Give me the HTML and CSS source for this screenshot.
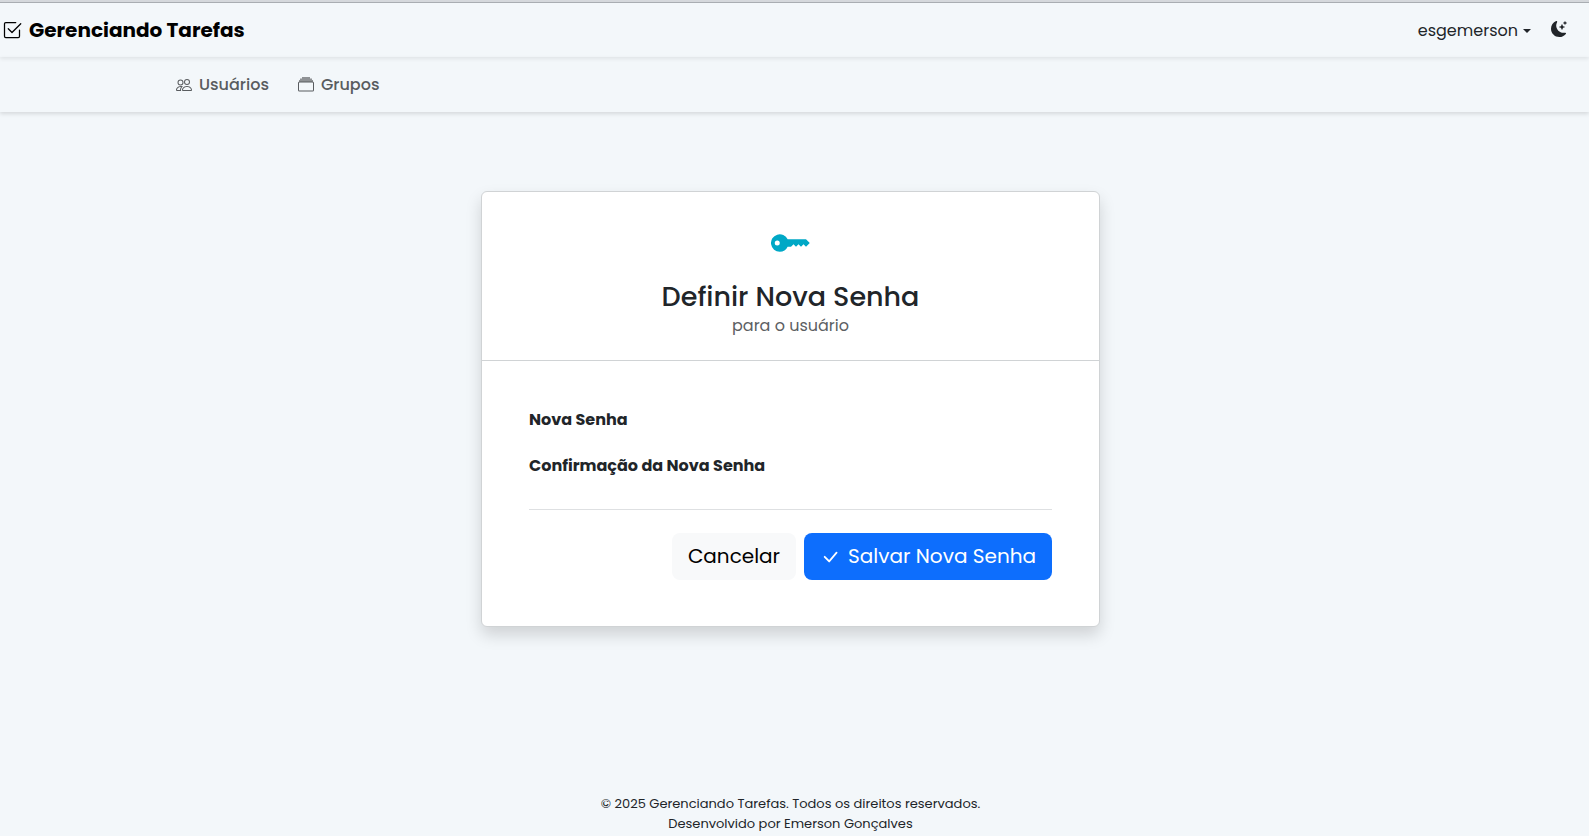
FILE: index.html
```html
<!DOCTYPE html>
<html lang="pt-BR">
<head>
<meta charset="utf-8">
<meta name="viewport" content="width=device-width, initial-scale=1">
<title>Gerenciando Tarefas</title>
<link rel="stylesheet" href="styles.css">
</head>
<body>
<header class="topbar">
  <a class="brand" href="#">
    <svg class="icon-brand" viewBox="0 0 16 16" fill="currentColor" aria-hidden="true"><path d="M3 14.5A1.5 1.5 0 0 1 1.5 13V3A1.5 1.5 0 0 1 3 1.5h8a.5.5 0 0 1 0 1H3a.5.5 0 0 0-.5.5v10a.5.5 0 0 0 .5.5h10a.5.5 0 0 0 .5-.5V8a.5.5 0 0 1 1 0v5a1.5 1.5 0 0 1-1.5 1.5z"/><path d="m8.354 10.354 7-7a.5.5 0 0 0-.708-.708L8 9.293 5.354 6.646a.5.5 0 1 0-.708.708l3 3a.5.5 0 0 0 .708 0"/></svg>
    <span>Gerenciando Tarefas</span>
  </a>
  <div class="account">
    <button class="user" type="button" aria-haspopup="true">esgemerson</button>
    <button class="theme" type="button" aria-label="Alternar tema">
      <svg class="icon" viewBox="0 0 16 16" fill="currentColor" aria-hidden="true"><path d="M6 .278a.77.77 0 0 1 .08.858 7.2 7.2 0 0 0-.878 3.46c0 4.021 3.278 7.277 7.318 7.277q.792-.001 1.533-.16a.79.79 0 0 1 .81.316.73.73 0 0 1-.031.893A8.35 8.35 0 0 1 8.344 16C3.734 16 0 12.286 0 7.71 0 4.266 2.114 1.312 5.124.06A.75.75 0 0 1 6 .278"/><path d="M10.794 3.148a.217.217 0 0 1 .412 0l.387 1.162c.173.518.579.924 1.097 1.097l1.162.387a.217.217 0 0 1 0 .412l-1.162.387a1.73 1.73 0 0 0-1.097 1.097l-.387 1.162a.217.217 0 0 1-.412 0l-.387-1.162A1.73 1.73 0 0 0 9.31 6.593l-1.162-.387a.217.217 0 0 1 0-.412l1.162-.387a1.73 1.73 0 0 0 1.097-1.097zM13.863.099a.145.145 0 0 1 .274 0l.258.774c.115.346.386.617.732.732l.774.258a.145.145 0 0 1 0 .274l-.774.258a1.16 1.16 0 0 0-.732.732l-.258.774a.145.145 0 0 1-.274 0l-.258-.774a1.16 1.16 0 0 0-.732-.732l-.774-.258a.145.145 0 0 1 0-.274l.774-.258c.346-.115.617-.386.732-.732z"/></svg>
    </button>
  </div>
</header>
<nav class="subnav" aria-label="Principal">
  <a class="nav-link" href="#">
    <svg class="icon" viewBox="0 0 16 16" fill="currentColor" aria-hidden="true"><path d="M15 14s1 0 1-1-1-4-5-4-5 3-5 4 1 1 1 1zm-7.978-1L7 12.996c.001-.264.167-1.03.76-1.72C8.312 10.629 9.282 10 11 10c1.717 0 2.687.63 3.24 1.276.593.69.758 1.457.76 1.72l-.008.002-.014.002zM11 7a2 2 0 1 0 0-4 2 2 0 0 0 0 4m3-2a3 3 0 1 1-6 0 3 3 0 0 1 6 0M6.936 9.28a6 6 0 0 0-1.23-.247A7 7 0 0 0 5 9c-4 0-5 3-5 4q0 1 1 1h4.216A2.24 2.24 0 0 1 5 13c0-1.01.377-2.042 1.09-2.904.243-.294.526-.569.846-.816M4.92 10A5.5 5.5 0 0 0 4 13H1c0-.26.164-1.03.76-1.724.545-.636 1.492-1.256 3.16-1.275ZM1.5 5.5a3 3 0 1 1 6 0 3 3 0 0 1-6 0m3-2a2 2 0 1 0 0 4 2 2 0 0 0 0-4"/></svg>
    <span>Usuários</span>
  </a>
  <a class="nav-link" href="#">
    <svg class="icon" viewBox="0 0 16 16" fill="currentColor" aria-hidden="true"><path opacity=".65" d="M4 0h8v1.5h2V3h1v2H1V3h1V1.5h2z"/><path d="M0 13a1.5 1.5 0 0 0 1.5 1.5h13A1.5 1.5 0 0 0 16 13V6a1.5 1.5 0 0 0-1.5-1.5h-13A1.5 1.5 0 0 0 0 6zm1.5.5A.5.5 0 0 1 1 13V6a.5.5 0 0 1 .5-.5h13a.5.5 0 0 1 .5.5v7a.5.5 0 0 1-.5.5z"/></svg>
    <span>Grupos</span>
  </a>
</nav>
<main class="content">
  <section class="card">
    <div class="card-header">
      <svg class="icon-key" viewBox="0 0 16 16" fill="currentColor" aria-hidden="true"><path d="M3.5 11.5a3.5 3.5 0 1 1 3.163-5H14L15.5 8 14 9.5l-1-1-1 1-1-1-1 1-1-1-1 1H6.663a3.5 3.5 0 0 1-3.163 2M2.5 9a1 1 0 1 0 0-2 1 1 0 0 0 0 2"/></svg>
      <h1 class="title">Definir Nova Senha</h1>
      <p class="subtitle">para o usuário</p>
    </div>
    <form class="card-body">
      <p class="label">Nova Senha</p>
      <p class="label">Confirmação da Nova Senha</p>
      <hr class="rule">
      <div class="actions">
        <button class="btn btn-light" type="button">Cancelar</button>
        <button class="btn btn-primary" type="submit">
          <svg class="icon-check" viewBox="0 0 16 16" fill="currentColor" aria-hidden="true"><path d="M12.736 3.97a.733.733 0 0 1 1.047 0c.286.289.29.756.01 1.05L7.88 12.01a.733.733 0 0 1-1.065.02L3.217 8.384a.757.757 0 0 1 0-1.06.733.733 0 0 1 1.047 0l3.052 3.093 5.4-6.425z"/></svg>
          <span>Salvar Nova Senha</span>
        </button>
      </div>
    </form>
  </section>
</main>
<footer class="footer">
  <p>© 2025 Gerenciando Tarefas. Todos os direitos reservados.</p>
  <p>Desenvolvido por Emerson Gonçalves</p>
</footer>
</body>
</html>
```
FILE: styles.css
```css
* { box-sizing: border-box; }

body {
  display: flex;
  flex-direction: column;
  min-height: 100vh;
  margin: 0;
  border-top: 2px solid #d5d8dc;
  background: #f3f7fa;
  color: #212529;
  font-family: Poppins, Inter, "Open Sans", sans-serif;
  font-size: 16px;
  line-height: 24px;
}

p, h1 { margin: 0; }
a { color: inherit; text-decoration: none; }
button { font-family: inherit; color: inherit; border: 0; cursor: pointer; }
svg { display: block; flex: none; }

.icon { width: 16px; height: 16px; }

.topbar {
  display: flex;
  align-items: center;
  justify-content: space-between;
  height: 55px;
  padding: 0 22px 0 2px;
  border-top: 1px solid #a9adb2;
  box-shadow: 0 2px 4px rgba(0, 0, 0, .08);
}

.brand {
  display: flex;
  align-items: center;
  gap: 7px;
  color: #000;
  font-size: 20px;
  font-weight: 700;
}
.icon-brand { width: 20px; height: 20px; }

.account { display: flex; align-items: center; gap: 20px; }
.user, .theme { padding: 0; background: none; }
.theme { padding-bottom: 2px; }
.user {
  display: flex;
  align-items: center;
  gap: 5px;
  padding-top: 2px;
  font-size: 16px;
  line-height: 24px;
}
.user::after {
  content: "";
  border: 4px solid transparent;
  border-top-color: currentColor;
  border-bottom: 0;
}

.subnav {
  display: flex;
  align-items: center;
  gap: 29px;
  height: 55px;
  padding-left: 176px;
  box-shadow: 0 2px 4px rgba(0, 0, 0, .12);
}
.nav-link {
  display: flex;
  align-items: center;
  gap: 7px;
  color: #595c5f;
  font-weight: 500;
}

.content {
  display: flex;
  flex: 1;
  flex-direction: column;
  align-items: center;
  padding: 79px 8px 24px 0;
}

.card {
  width: 100%;
  max-width: 619px;
  border: 1px solid #d0d3d5;
  border-radius: 6px;
  background: #fff;
  box-shadow: 0 8px 16px rgba(0, 0, 0, .15);
}
.card-header {
  display: flex;
  flex-direction: column;
  align-items: center;
  padding: 31px 16px 22px;
  border-bottom: 1px solid #d0d3d5;
  text-align: center;
}
.icon-key { width: 40px; height: 40px; color: #00a8c6; }
.title {
  margin-top: 17px;
  font-size: 27px;
  font-weight: 500;
  line-height: 34px;
}
.subtitle { color: #5c6063; }

.card-body { padding: 47px 47px 46px; }
.label { margin-bottom: 22px; font-weight: 700; }
.rule {
  margin: 31px 0 23px;
  border: 0;
  border-top: 1px solid #dee0e2;
}
.actions { display: flex; justify-content: flex-end; gap: 8px; }
.btn {
  display: flex;
  align-items: center;
  gap: 8px;
  padding: 8px 16px;
  border-radius: 8px;
  font-size: 20px;
  line-height: 31px;
}
.btn-light { background: #f8f9fa; color: #000; }
.btn-primary { background: #0d6efd; color: #fff; }
.icon-check { width: 20px; height: 20px; }

.footer {
  padding: 0 8px 2px 0;
  font-size: 13px;
  line-height: 20px;
  text-align: center;
}
```
